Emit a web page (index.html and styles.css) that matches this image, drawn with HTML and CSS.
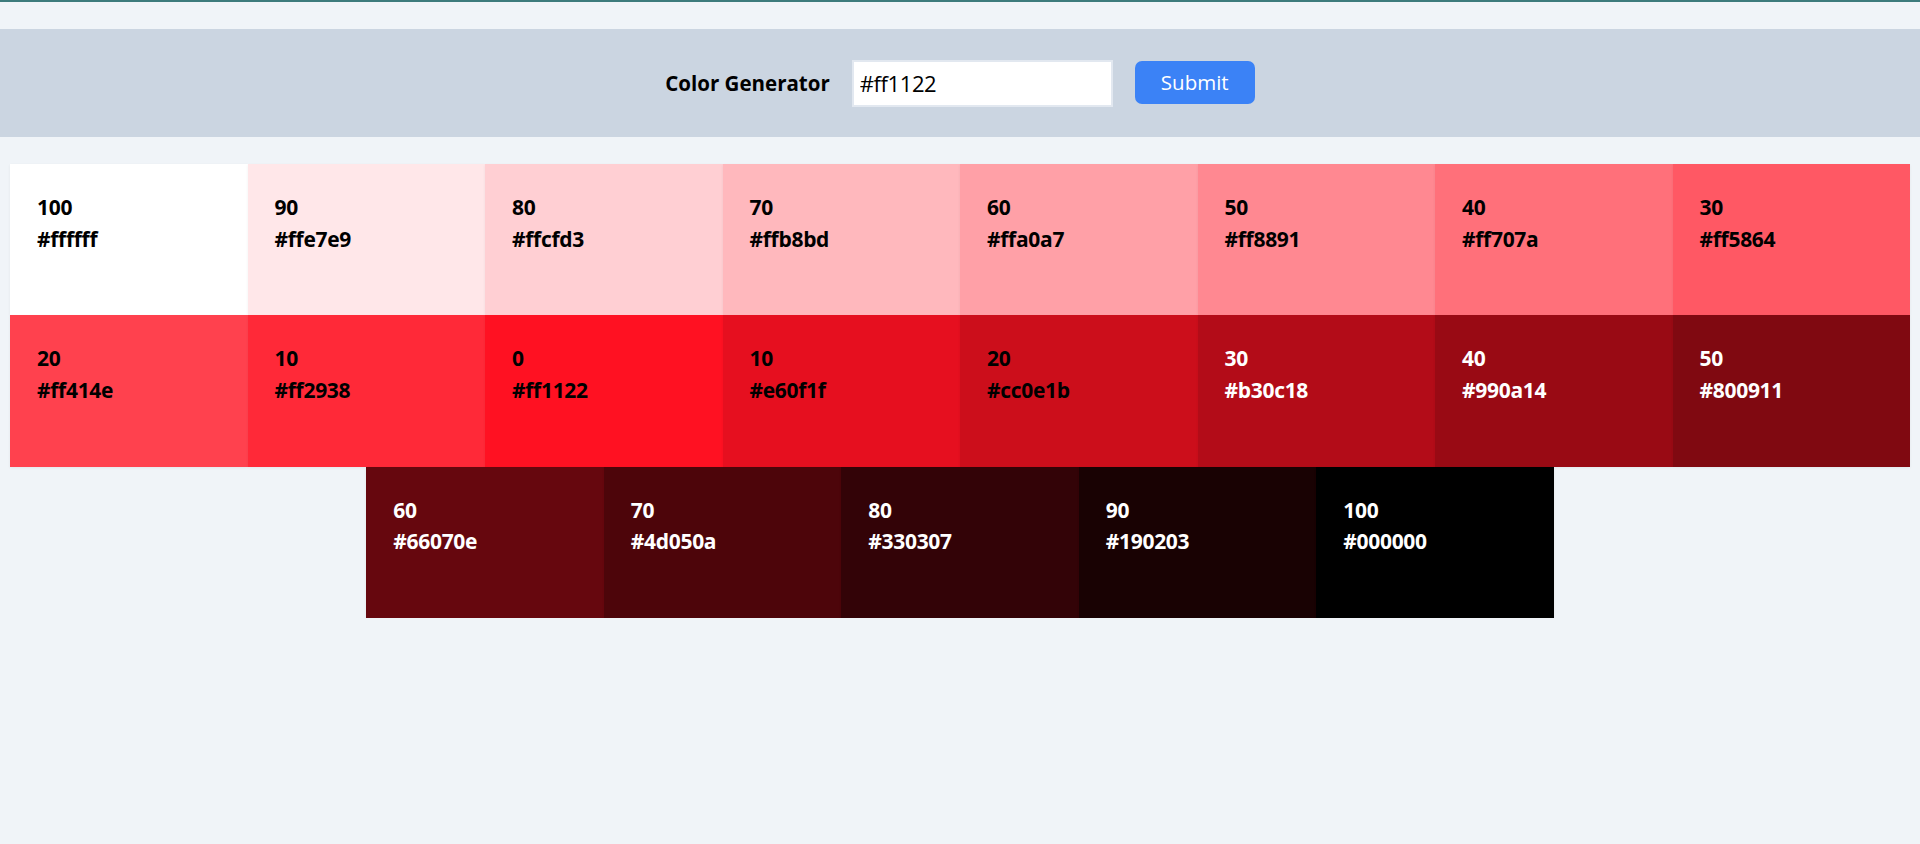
FILE: index.html
```html
<!DOCTYPE html>
<html lang="en">
<head>
<meta charset="utf-8">
<title>Color Generator</title>
<link rel="stylesheet" href="styles.css">
</head>
<body>
<div class="topline"></div>
<section class="header">
  <form class="gen-form">
    <label class="gen-label" for="color">Color Generator</label>
    <input class="gen-input" id="color" type="text" value="#ff1122">
    <button class="gen-btn" type="button">Submit</button>
  </form>
</section>
<section class="colors">
  <article class="swatch" style="background:#ffffff"><p class="weight">100</p><p class="hex">#ffffff</p></article>
  <article class="swatch" style="background:#ffe7e9"><p class="weight">90</p><p class="hex">#ffe7e9</p></article>
  <article class="swatch" style="background:#ffcfd3"><p class="weight">80</p><p class="hex">#ffcfd3</p></article>
  <article class="swatch" style="background:#ffb8bd"><p class="weight">70</p><p class="hex">#ffb8bd</p></article>
  <article class="swatch" style="background:#ffa0a7"><p class="weight">60</p><p class="hex">#ffa0a7</p></article>
  <article class="swatch" style="background:#ff8891"><p class="weight">50</p><p class="hex">#ff8891</p></article>
  <article class="swatch" style="background:#ff707a"><p class="weight">40</p><p class="hex">#ff707a</p></article>
  <article class="swatch" style="background:#ff5864"><p class="weight">30</p><p class="hex">#ff5864</p></article>
  <article class="swatch" style="background:#ff414e"><p class="weight">20</p><p class="hex">#ff414e</p></article>
  <article class="swatch" style="background:#ff2938"><p class="weight">10</p><p class="hex">#ff2938</p></article>
  <article class="swatch" style="background:#ff1122"><p class="weight">0</p><p class="hex">#ff1122</p></article>
  <article class="swatch" style="background:#e60f1f"><p class="weight">10</p><p class="hex">#e60f1f</p></article>
  <article class="swatch" style="background:#cc0e1b"><p class="weight">20</p><p class="hex">#cc0e1b</p></article>
  <article class="swatch dark" style="background:#b30c18"><p class="weight">30</p><p class="hex">#b30c18</p></article>
  <article class="swatch dark" style="background:#990a14"><p class="weight">40</p><p class="hex">#990a14</p></article>
  <article class="swatch dark" style="background:#800911"><p class="weight">50</p><p class="hex">#800911</p></article>
  <article class="swatch dark" style="background:#66070e"><p class="weight">60</p><p class="hex">#66070e</p></article>
  <article class="swatch dark" style="background:#4d050a"><p class="weight">70</p><p class="hex">#4d050a</p></article>
  <article class="swatch dark" style="background:#330307"><p class="weight">80</p><p class="hex">#330307</p></article>
  <article class="swatch dark" style="background:#190203"><p class="weight">90</p><p class="hex">#190203</p></article>
  <article class="swatch dark" style="background:#000000"><p class="weight">100</p><p class="hex">#000000</p></article>
</section>
</body>
</html>
```
FILE: styles.css
```css
* {
  box-sizing: border-box;
}

html, body {
  margin: 0;
  padding: 0;
  background: #f0f4f8;
  font-family: "Open Sans", "Noto Sans", sans-serif;
  color: #000;
}

.topline {
  height: 2px;
  background: #3d7b7c;
}

.header {
  margin-top: 27px;
  height: 108px;
  background: #cbd5e1;
  display: flex;
  align-items: center;
  justify-content: center;
}

.gen-form {
  display: flex;
  align-items: center;
  gap: 22px;
}

.gen-label {
  font-size: 20.5px;
  font-weight: 700;
  letter-spacing: 0;
}

.gen-input {
  width: 261px;
  height: 47px;
  border: 2px solid #e2e8f0;
  background: #fff;
  padding: 0 6px;
  font-family: "Open Sans", "Noto Sans", sans-serif;
  font-size: 22px;
  letter-spacing: -0.4px;
  color: #000;
  outline: none;
}

.gen-btn {
  width: 120px;
  height: 43px;
  margin-top: -2px;
  border: none;
  border-radius: 7px;
  background: #3b82f6;
  color: #fff;
  font-family: "Open Sans", "Noto Sans", sans-serif;
  font-size: 20.5px;
  cursor: pointer;
}

.colors {
  margin: 27px 10px 0;
  display: flex;
  flex-wrap: wrap;
  justify-content: center;
}

.swatch {
  width: 12.5%;
  height: 151.25px;
  padding: 28px 27px;
  box-shadow: 0 1px 3px rgba(0, 0, 0, 0.06);
}

.swatch p {
  margin: 0;
  font-size: 21px;
  font-weight: 700;
  line-height: 31.6px;
  letter-spacing: -0.3px;
}

.swatch.dark p {
  color: #fff;
}
```
